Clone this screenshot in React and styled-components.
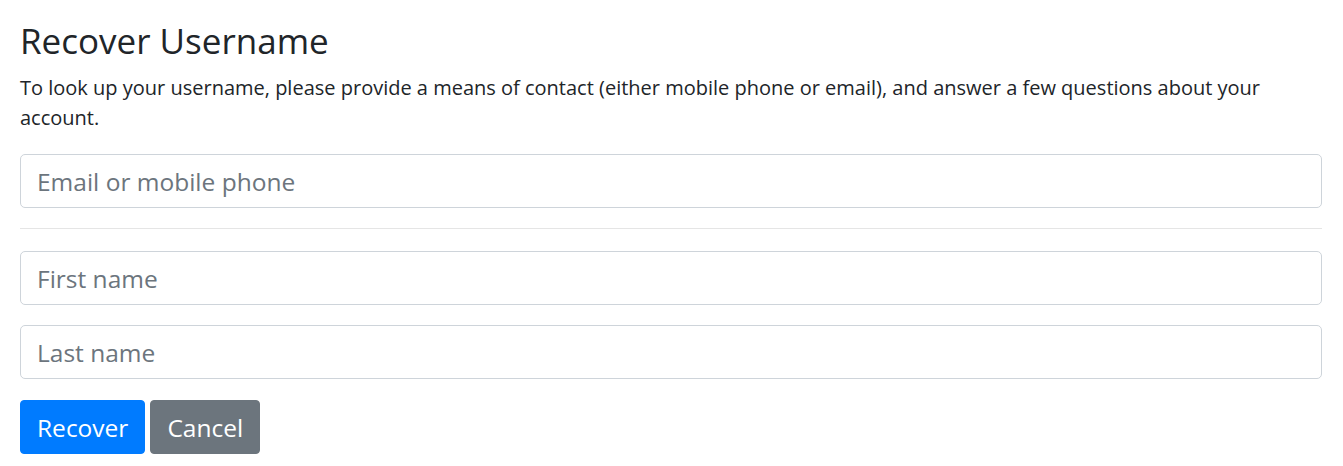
import React from "react";
import styled, { createGlobalStyle } from "styled-components";

const GlobalStyle = createGlobalStyle`
  body {
    margin: 0;
    background: #fff;
    font-family: "Open Sans", "Noto Sans", sans-serif;
    color: #212529;
  }
  * {
    box-sizing: border-box;
  }
`;

const Container = styled.div`
  padding: 20px 21px 20px 20px;
`;

const Title = styled.h2`
  margin: 0 0 11px;
  font-size: 35px;
  font-weight: 400;
  line-height: 42px;
`;

const Lead = styled.p`
  margin: 0 0 21px;
  font-size: 20px;
  line-height: 30px;
`;

const Form = styled.form`
  display: flex;
  flex-direction: column;
`;

const Field = styled.input`
  display: block;
  width: 100%;
  height: 54px;
  margin-bottom: ${(p) => (p.$last ? "21px" : "20px")};
  padding: 0 16px;
  font-family: inherit;
  font-size: 24.5px;
  color: #495057;
  background: #fff;
  border: 1px solid #ced4da;
  border-radius: 5px;
  outline: none;

  &::placeholder {
    color: #6c757d;
  }
`;

const Divider = styled.hr`
  margin: 0 0 22px;
  border: 0;
  border-top: 1px solid rgba(0, 0, 0, 0.1);
`;

const Actions = styled.div`
  display: flex;
  gap: 5px;
`;

const Button = styled.button`
  height: 54px;
  padding: 0 16px;
  font-family: inherit;
  font-size: 24.5px;
  color: #fff;
  background: ${(p) => (p.$variant === "secondary" ? "#6c757d" : "#007bff")};
  border: 1px solid
    ${(p) => (p.$variant === "secondary" ? "#6c757d" : "#007bff")};
  border-radius: 4px;
  cursor: pointer;
`;

const App = () => {
  return (
    <Container>
      <GlobalStyle />
      <Title>Recover Username</Title>
      <Lead>
        To look up your username, please provide a means of contact (either
        mobile phone or email), and answer a few questions about your account.
      </Lead>
      <Form onSubmit={(e) => e.preventDefault()}>
        <Field type="text" placeholder="Email or mobile phone" />
        <Divider />
        <Field type="text" placeholder="First name" />
        <Field type="text" placeholder="Last name" $last />
        <Actions>
          <Button type="submit">Recover</Button>
          <Button type="button" $variant="secondary">
            Cancel
          </Button>
        </Actions>
      </Form>
    </Container>
  );
};

export default App;
